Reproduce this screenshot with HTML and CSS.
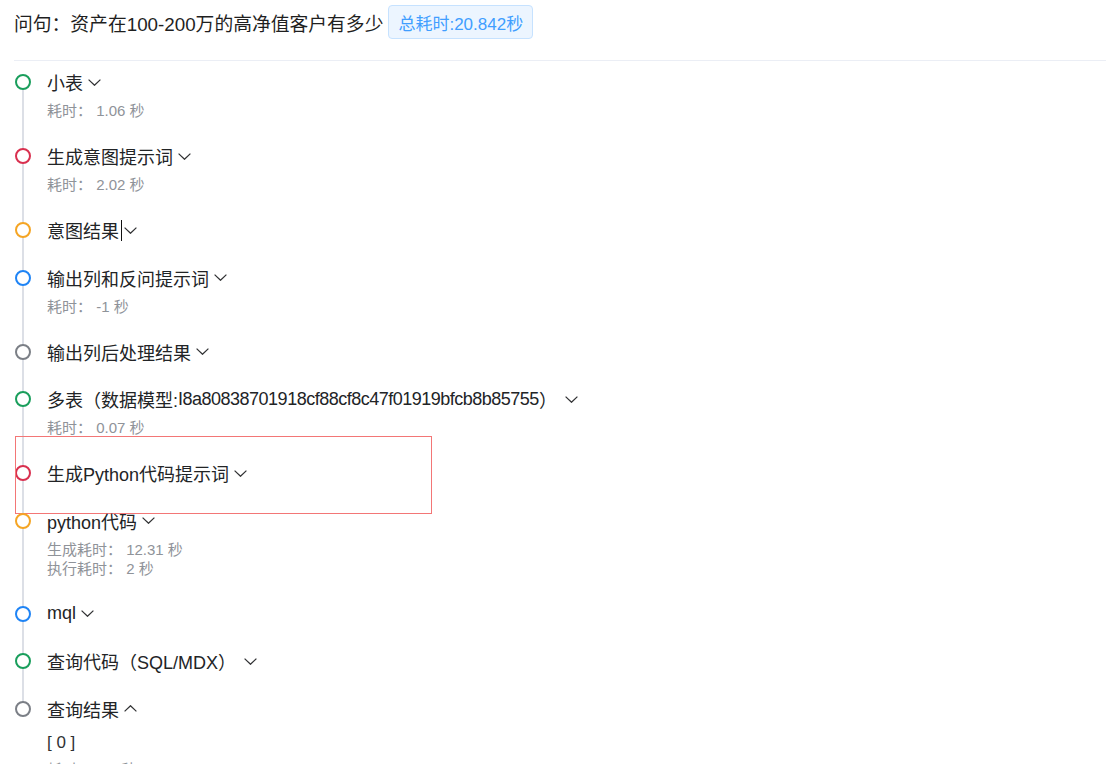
FILE: index.html
```html
<!DOCTYPE html>
<html lang="zh-CN">
<head>
<meta charset="utf-8">
<title>问句</title>
<link rel="stylesheet" href="styles.css">
</head>
<body>
<div class="page">
  <div class="header">
    <span class="question">问句：资产在100-200万的高净值客户有多少</span>
    <span class="tag">总耗时:20.842秒</span>
  </div>
  <div class="divider"></div>
  <ul class="timeline">
    <li class="item">
      <span class="line"></span><span class="dot green"></span>
      <div class="title">小表<svg class="chev" viewBox="0 0 13 7"><polyline points="0.6,0.6 6.5,6.3 12.4,0.6"/></svg></div>
      <div class="sub">耗时： 1.06 秒</div>
    </li>
    <li class="item">
      <span class="line"></span><span class="dot red"></span>
      <div class="title">生成意图提示词<svg class="chev" viewBox="0 0 13 7"><polyline points="0.6,0.6 6.5,6.3 12.4,0.6"/></svg></div>
      <div class="sub">耗时： 2.02 秒</div>
    </li>
    <li class="item">
      <span class="line"></span><span class="dot orange"></span>
      <div class="title">意图结果<span class="caret"></span><svg class="chev tight" viewBox="0 0 13 7"><polyline points="0.6,0.6 6.5,6.3 12.4,0.6"/></svg></div>
    </li>
    <li class="item">
      <span class="line"></span><span class="dot blue"></span>
      <div class="title">输出列和反问提示词<svg class="chev" viewBox="0 0 13 7"><polyline points="0.6,0.6 6.5,6.3 12.4,0.6"/></svg></div>
      <div class="sub">耗时： -1 秒</div>
    </li>
    <li class="item">
      <span class="line"></span><span class="dot gray"></span>
      <div class="title">输出列后处理结果<svg class="chev" viewBox="0 0 13 7"><polyline points="0.6,0.6 6.5,6.3 12.4,0.6"/></svg></div>
    </li>
    <li class="item">
      <span class="line"></span><span class="dot green"></span>
      <div class="title">多表（数据模型:<span class="code">I8a80838701918cf88cf8c47f01919bfcb8b85755</span>）<svg class="chev wide" viewBox="0 0 13 7"><polyline points="0.6,0.6 6.5,6.3 12.4,0.6"/></svg></div>
      <div class="sub">耗时： 0.07 秒</div>
    </li>
    <li class="item">
      <span class="line"></span><span class="dot red"></span>
      <div class="title">生成Python代码提示词<svg class="chev" viewBox="0 0 13 7"><polyline points="0.6,0.6 6.5,6.3 12.4,0.6"/></svg></div>
      <span class="highlight"></span>
    </li>
    <li class="item">
      <span class="line"></span><span class="dot orange"></span>
      <div class="title">python代码<svg class="chev" viewBox="0 0 13 7"><polyline points="0.6,0.6 6.5,6.3 12.4,0.6"/></svg></div>
      <div class="sub">生成耗时： 12.31 秒<br>执行耗时： 2 秒</div>
    </li>
    <li class="item">
      <span class="line"></span><span class="dot blue"></span>
      <div class="title">mql<svg class="chev" viewBox="0 0 13 7"><polyline points="0.6,0.6 6.5,6.3 12.4,0.6"/></svg></div>
    </li>
    <li class="item">
      <span class="line"></span><span class="dot green"></span>
      <div class="title">查询代码（SQL/MDX）<svg class="chev wide" viewBox="0 0 13 7"><polyline points="0.6,0.6 6.5,6.3 12.4,0.6"/></svg></div>
    </li>
    <li class="item last">
      <span class="dot gray"></span>
      <div class="title">查询结果<svg class="chev" viewBox="0 0 13 7"><polyline points="0.6,6.4 6.5,0.7 12.4,6.4"/></svg></div>
      <div class="result">[ 0 ]</div>
      <div class="sub">耗时： 0.6 秒</div>
    </li>
  </ul>
</div>
</body>
</html>
```
FILE: styles.css
```css
html, body {
  margin: 0;
  padding: 0;
  background: #ffffff;
}
body {
  font-family: "Liberation Sans", "Noto Sans CJK SC", sans-serif;
  color: #303133;
  overflow: hidden;
}
.page {
  padding: 5px 0 0 14px;
}
.header {
  display: flex;
  align-items: center;
  height: 34px;
  gap: 5px;
}
.question {
  font-size: 18.8px;
  color: #1f1f1f;
}
.tag {
  display: inline-flex;
  align-items: center;
  height: 32px;
  padding: 0 9px;
  border: 1px solid #c6e2ff;
  background: #ecf5ff;
  color: #409eff;
  border-radius: 4px;
  font-size: 17px;
}
.divider {
  margin-top: 21px;
  border-top: 1px solid #ebeef5;
}
.timeline {
  list-style: none;
  margin: 7px 0 0 0;
  padding: 0;
}
.item {
  position: relative;
  padding: 0 0 19.5px 33px;
}
.line {
  position: absolute;
  left: 8px;
  top: 14px;
  bottom: -14px;
  width: 2px;
  background: #dcdfe6;
}
.dot {
  position: absolute;
  left: 1px;
  top: 6px;
  width: 12px;
  height: 12px;
  border: 2px solid;
  border-radius: 50%;
  background: #ffffff;
}
.dot.green { border-color: #1a9e5c; }
.dot.red { border-color: #d9304f; }
.dot.orange { border-color: #f5a524; }
.dot.blue { border-color: #1f84f5; }
.dot.gray { border-color: #7b7f86; }
.title {
  display: flex;
  align-items: center;
  height: 28px;
  font-size: 18px;
  color: #222426;
  white-space: nowrap;
}
.code {
  letter-spacing: -0.5px;
}
.chev {
  width: 13px;
  height: 7px;
  margin-left: 5px;
  fill: none;
  stroke: #303133;
  stroke-width: 1.2;
}
.chev.tight { margin-left: 2px; }
.chev.wide { margin-left: 8px; }
.caret {
  display: inline-block;
  width: 1px;
  height: 21px;
  margin-left: 2px;
  background: #111111;
}
.sub {
  margin: 5px 0 2.5px 0;
  font-size: 15px;
  line-height: 19px;
  color: #8f9399;
}
.result {
  margin-top: 8px;
  font-size: 17px;
  line-height: 24px;
  color: #303133;
}
.highlight {
  position: absolute;
  left: 1px;
  top: -23px;
  width: 415px;
  height: 76px;
  border: 1.5px solid #f37676;
  pointer-events: none;
}
```
